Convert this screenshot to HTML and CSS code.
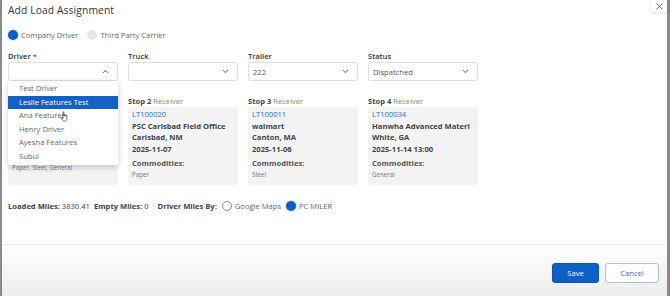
FILE: index.html
```html
<!DOCTYPE html>
<html>
<head>
<meta charset="utf-8">
<link rel="stylesheet" href="styles.css">
</head>
<body>
<div class="modal">
  <header class="head">
    <h1 class="title">Add Load Assignment</h1>
    <button class="close" aria-label="Close">
      <svg width="7" height="7" viewBox="0 0 7 7"><path d="M0.5 0.5L6.5 6.5M6.5 0.5L0.5 6.5" stroke="#666" stroke-width="1"/></svg>
    </button>
  </header>
  <main class="content">
    <div class="radios">
      <label class="radio"><span class="dot on"></span>Company Driver</label>
      <label class="radio"><span class="dot off"></span>Third Party Carrier</label>
    </div>
    <div class="fields">
      <div class="field">
        <div class="label">Driver <span class="req">*</span></div>
        <div class="select open">
          <span></span>
          <svg class="chev" width="7" height="5" viewBox="0 0 7 5"><path d="M0.8 4L3.5 1.3L6.2 4" fill="none" stroke="#666" stroke-width="1"/></svg>
        </div>
        <ul class="menu">
          <li>Test Driver</li>
          <li class="active">Leslie Features Test</li>
          <li>Ana Features<svg class="cursor" width="10" height="11" viewBox="0 0 10 11"><path d="M3 1.2c0-.6.9-.6.9 0V5l.1-.9c0-.6.9-.6.9 0v1l.1-.7c0-.6.9-.6.9 0v.9l.1-.5c0-.6.9-.6.9 0v2.7c0 1.4-1 2.6-2.5 2.6H4.4c-.9 0-1.4-.4-1.9-1L.9 7c-.3-.5.3-1 .8-.6L3 7.5z" fill="#fff" stroke="#333" stroke-width=".7"/></svg></li>
          <li>Henry Driver</li>
          <li>Ayesha Features</li>
          <li>Subul</li>
        </ul>
      </div>
      <div class="field">
        <div class="label">Truck</div>
        <div class="select">
          <span></span>
          <svg class="chev" width="7" height="5" viewBox="0 0 7 5"><path d="M0.8 1L3.5 3.7L6.2 1" fill="none" stroke="#666" stroke-width="1"/></svg>
        </div>
      </div>
      <div class="field">
        <div class="label">Trailer</div>
        <div class="select">
          <span>222</span>
          <svg class="chev" width="7" height="5" viewBox="0 0 7 5"><path d="M0.8 1L3.5 3.7L6.2 1" fill="none" stroke="#666" stroke-width="1"/></svg>
        </div>
      </div>
      <div class="field">
        <div class="label">Status</div>
        <div class="select">
          <span>Dispatched</span>
          <svg class="chev" width="7" height="5" viewBox="0 0 7 5"><path d="M0.8 1L3.5 3.7L6.2 1" fill="none" stroke="#666" stroke-width="1"/></svg>
        </div>
      </div>
    </div>
    <div class="stops">
      <div class="stop">
        <div class="stop-head"></div>
        <div class="card card-hidden">
          <div class="small">Paper, Steel, General</div>
        </div>
      </div>
      <div class="stop">
        <div class="stop-head"><b>Stop 2</b> Receiver</div>
        <div class="card">
          <a class="lt">LT100020</a>
          <div class="strong">PSC Carlsbad Field Office</div>
          <div class="strong">Carlsbad, NM</div>
          <div class="strong">2025-11-07</div>
          <div class="strong com">Commodities:</div>
          <div class="small">Paper</div>
        </div>
      </div>
      <div class="stop">
        <div class="stop-head"><b>Stop 3</b> Receiver</div>
        <div class="card">
          <a class="lt">LT100011</a>
          <div class="strong">walmart</div>
          <div class="strong">Canton, MA</div>
          <div class="strong">2025-11-06</div>
          <div class="strong com">Commodities:</div>
          <div class="small">Steel</div>
        </div>
      </div>
      <div class="stop">
        <div class="stop-head"><b>Stop 4</b> Receiver</div>
        <div class="card">
          <a class="lt">LT100034</a>
          <div class="strong">Hanwha Advanced Materi</div>
          <div class="strong">White, GA</div>
          <div class="strong">2025-11-14 13:00</div>
          <div class="strong com">Commodities:</div>
          <div class="small">General</div>
        </div>
      </div>
    </div>
    <div class="miles">
      <span><b>Loaded Miles:</b> 3830.41</span>
      <span><b>Empty Miles:</b> 0</span>
      <span class="sep"></span>
      <b>Driver Miles By:</b>
      <label class="radio"><span class="dot ring"></span>Google Maps</label>
      <label class="radio"><span class="dot on"></span>PC MILER</label>
    </div>
  </main>
  <footer class="foot">
    <button class="btn primary">Save</button>
    <button class="btn ghost">Cancel</button>
  </footer>
</div>
</body>
</html>
```
FILE: styles.css
```css
* { box-sizing: border-box; }
html, body { margin: 0; padding: 0; }
body {
  width: 670px;
  height: 296px;
  overflow: hidden;
  background: #8a8a8a;
  font-family: "Open Sans", "DejaVu Sans", sans-serif;
  color: #333;
}
.modal {
  margin-left: 2px;
  width: 665px;
  height: 296px;
  background: #fff;
  display: flex;
  flex-direction: column;
}
.head {
  display: flex;
  justify-content: space-between;
  align-items: flex-start;
  padding: 0 0 0 6px;
  height: 26px;
}
.title {
  margin: 3px 0 0;
  font-size: 10.3px;
  font-weight: 500;
  color: #333;
  letter-spacing: 0.1px;
}
.close {
  width: 16px;
  height: 12px;
  border: none;
  background: #fff;
  box-shadow: 0 1px 4px rgba(0,0,0,0.15);
  border-radius: 0 0 2px 2px;
  padding: 0;
  display: flex;
  align-items: center;
  justify-content: center;
}
.content {
  padding: 0 6px;
  flex: 1;
  display: flex;
  flex-direction: column;
}
.radios {
  display: flex;
  gap: 9px;
  margin-top: 3px;
  height: 12px;
  align-items: center;
}
.radio {
  display: inline-flex;
  align-items: center;
  gap: 3px;
  font-size: 7.6px;
  color: #666;
}
.dot {
  width: 10px;
  height: 10px;
  border-radius: 50%;
  display: inline-block;
}
.dot.on { background: #0c5ec8; box-shadow: 0 0 2px rgba(12,94,200,0.5); }
.dot.off { background: #e6e6e6; }
.dot.ring { border: 1px solid #888; background: #fff; }
.fields {
  display: grid;
  grid-template-columns: repeat(4, 110px);
  column-gap: 10px;
  margin-top: 10px;
}
.field { position: relative; }
.label {
  font-size: 7.6px;
  font-weight: 600;
  color: #333;
  height: 10px;
  line-height: 10px;
}
.req { color: #d33; }
.select {
  margin-top: 1px;
  height: 19px;
  border: 1px solid #ddd;
  border-radius: 3px;
  display: flex;
  align-items: center;
  justify-content: space-between;
  padding: 0 8px 0 4px;
  font-size: 7.6px;
  color: #555;
}
.chev { display: block; }
.menu {
  position: absolute;
  left: 0;
  top: 30px;
  width: 110px;
  margin: 0;
  padding: 1px 0 2px;
  list-style: none;
  background: #fff;
  box-shadow: 0 2px 6px rgba(0,0,0,0.2);
  border-radius: 0 0 2px 2px;
  z-index: 5;
}
.menu li {
  position: relative;
  height: 13.5px;
  line-height: 13.5px;
  padding-left: 11px;
  font-size: 7.6px;
  color: #666;
}
.menu li.active { background: #1461c6; color: #fff; }
.cursor { position: absolute; left: 52px; top: 2px; }
.stops {
  display: grid;
  grid-template-columns: repeat(4, 110px);
  column-gap: 10px;
  margin-top: 15px;
}
.stop-head {
  font-size: 7.6px;
  color: #888;
  height: 11px;
  line-height: 11px;
}
.stop-head b { color: #444; font-weight: 700; }
.card {
  height: 78px;
  background: #f3f3f3;
  border-radius: 3px;
  padding: 2px 4px;
  display: flex;
  flex-direction: column;
}
.card-hidden { padding-top: 55px; }
.lt {
  color: #2f6fc9;
  font-size: 7.6px;
  line-height: 11.5px;
}
.strong {
  font-size: 7.6px;
  font-weight: 700;
  color: #444;
  line-height: 11.5px;
  white-space: nowrap;
  overflow: hidden;
}
.com { margin-top: 2.5px; color: #555; }
.small {
  font-size: 6.2px;
  color: #777;
  line-height: 12px;
}
.miles {
  display: flex;
  align-items: center;
  margin-top: 14px;
  height: 14px;
  font-size: 7.6px;
  color: #444;
  gap: 4px;
}
.miles b { font-weight: 700; color: #444; }
.sep {
  width: 1px;
  height: 14px;
  background: #eee;
  margin: 0;
}
.miles .radio { margin-left: 1px; }
.foot {
  height: 52px;
  border-top: 1px solid #eee;
  background: linear-gradient(#fff, #ececec);
  display: flex;
  justify-content: flex-end;
  align-items: flex-start;
  padding: 18px 8px 0 0;
  gap: 6px;
}
.btn {
  height: 20px;
  border-radius: 3px;
  font-family: inherit;
  font-size: 7.6px;
  padding: 0;
}
.primary { width: 47px; background: #0c5ec8; color: #fff; border: 1px solid #0a54b5; }
.ghost { width: 54px; background: #fff; color: #3a6cb3; border: 1px solid #a9c2e0; }
```
